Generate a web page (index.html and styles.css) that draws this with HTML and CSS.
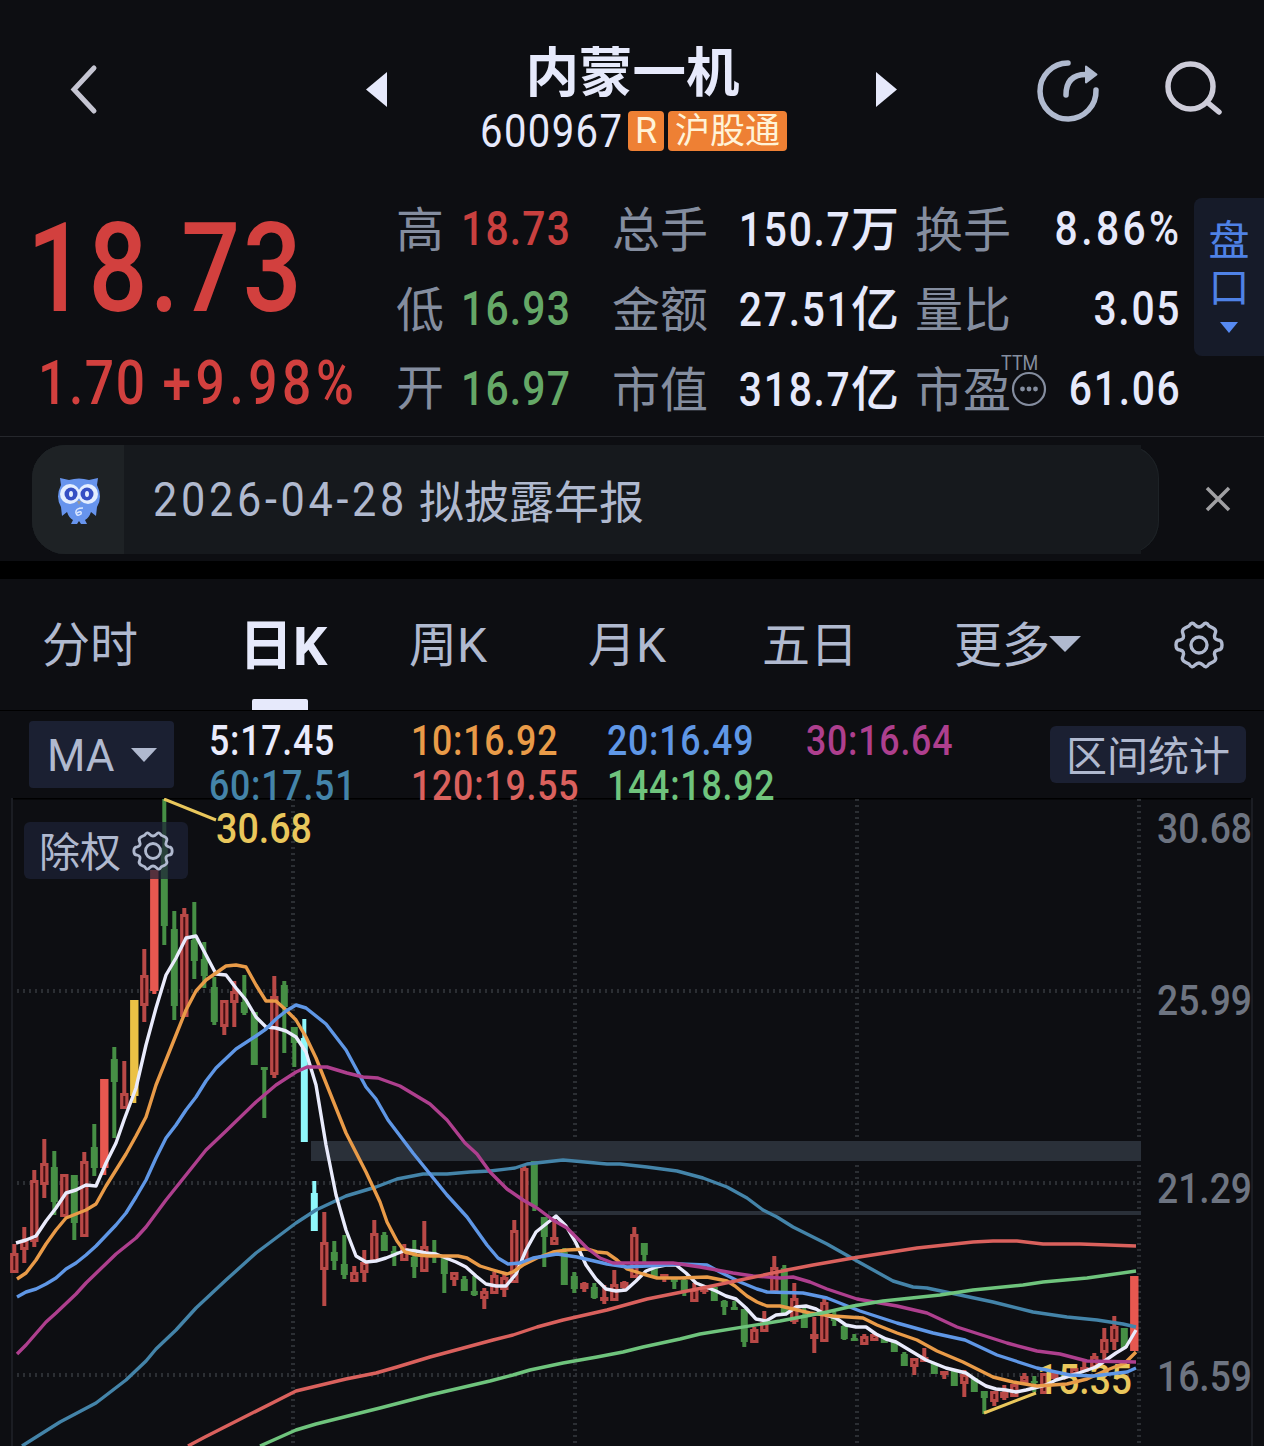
FILE: index.html
```html
<!DOCTYPE html>
<html lang="zh-CN">

<head>
	<meta charset="UTF-8">
	<meta name="viewport" content="width=device-width, initial-scale=1.0">
	<title>内蒙一机 600967</title>
	<link rel="stylesheet" href="styles.css">
</head>

<body>
	<header class="header">
		<svg class="icon-back" viewBox="0 0 30 52"><path d="M25 5L5 26.500L25 48" /></svg>
		<svg class="icon-prev" viewBox="0 0 21 35"><path d="M21 0V35L0 17.500Z" /></svg>
		<div class="title">
			<h1>内蒙一机</h1>
			<div class="code-row">
				<span class="code">600967</span>
				<span class="tag">R</span>
				<span class="tag tag-wide">沪股通</span>
			</div>
		</div>
		<svg class="icon-next" viewBox="0 0 21 35"><path d="M0 0V35L21 17.500Z" /></svg>
		<svg class="icon-share" viewBox="0 0 64 64">
			<path d="M32 4A28 28 0 1 0 60 31" />
			<path d="M30 36C30 22 37 15.500 50 15.500" />
			<path class="tip" d="M50 7.500L60.500 15.500L50 23.500Z" />
		</svg>
		<svg class="icon-search" viewBox="0 0 60 56">
			<circle cx="26.500" cy="26.500" r="22.500" />
			<path d="M43 42L55 52" />
		</svg>
	</header>

	<section class="quote">
		<div class="price">
			<div class="price-now">18.73</div>
			<div class="price-change"><span>1.70</span><span class="rate">+9.98%</span></div>
		</div>
		<div class="stats">
			<div class="stat first"><span class="label">高</span><span class="num up">18.73</span></div>
			<div class="stat second"><span class="label">总手</span><span class="value"><span class="num">150.7</span><span class="unit">万</span></span></div>
			<div class="stat third"><span class="label">换手</span><span class="num percent">8.86%</span></div>
			<div class="stat first"><span class="label">低</span><span class="num down">16.93</span></div>
			<div class="stat second"><span class="label">金额</span><span class="value"><span class="num">27.51</span><span class="unit">亿</span></span></div>
			<div class="stat third"><span class="label">量比</span><span class="num">3.05</span></div>
			<div class="stat first"><span class="label open">开</span><span class="num down">16.97</span></div>
			<div class="stat second"><span class="label">市值</span><span class="value"><span class="num">318.7</span><span class="unit">亿</span></span></div>
			<div class="stat third">
				<span class="label">市盈<span class="ttm">TTM</span>
					<svg class="icon-info" viewBox="0 0 36 36">
						<circle cx="18" cy="18" r="16" />
						<g class="dots"><circle cx="11.500" cy="18" r="2.400" /><circle cx="18" cy="18" r="2.400" /><circle cx="24.500" cy="18" r="2.400" /></g>
					</svg>
				</span>
				<span class="num">61.06</span>
			</div>
		</div>
		<div class="side-tab">
			<span>盘</span>
			<span>口</span>
			<svg viewBox="0 0 18 11"><path d="M0 0H18L9 11Z" /></svg>
		</div>
	</section>

	<section class="notice">
		<div class="notice-pill">
			<div class="notice-icon">
				<svg viewBox="0 0 44 48">
					<path class="owl-blue" d="M3 1L12 3Q22 0 32 3L41 1L40 8Q46 20 40 30L39 39L34 35Q32 41 28 43L30 47H24L22 44L20 47H14L16 43Q12 41 10 35L5 39L4 30Q-2 20 4 8Z" />
					<circle class="owl-white" cx="13" cy="17" r="10" />
					<circle class="owl-white" cx="31" cy="17" r="10" />
					<circle class="owl-dark" cx="14" cy="17" r="6.500" />
					<circle class="owl-dark" cx="30" cy="17" r="6.500" />
					<ellipse class="owl-white" cx="14" cy="17" rx="2" ry="3" />
					<ellipse class="owl-white" cx="30" cy="17" rx="2" ry="3" />
					<path class="owl-beak" d="M20 24H24L22 28Z" />
					<path class="owl-mark" d="M26 31Q18 31 19 36Q20 40 24 37Q25 33 20 36" />
				</svg>
			</div>
			<div class="notice-text"><span class="date">2026-04-28</span>拟披露年报</div>
		</div>
		<svg class="icon-close" viewBox="0 0 28 28"><path d="M3 3L25 25M25 3L3 25" /></svg>
	</section>

	<nav class="tabs">
		<a class="tab">分时</a>
		<a class="tab active">日K</a>
		<a class="tab">周K</a>
		<a class="tab">月K</a>
		<a class="tab">五日</a>
		<a class="tab">更多<svg class="caret" viewBox="0 0 32 16"><path d="M0 0H32L16 16Z" /></svg></a>
		<svg class="icon-gear" viewBox="0 0 50 48">
			<path d="M15 5Q18 0 21 4Q25 8 29 4Q32 0 35 5L39 7Q43 9 41 13Q39 18 44 19Q48 19 48 24Q48 29 44 29Q39 30 41 35Q43 39 39 41L35 43Q32 48 29 44Q25 40 21 44Q18 48 15 43L11 41Q7 39 9 35Q11 30 6 29Q2 29 2 24Q2 19 6 19Q11 18 9 13Q7 9 11 7Z" />
			<circle cx="25" cy="24" r="8" />
		</svg>
	</nav>

	<section class="legend">
		<button class="ma-btn">MA<svg class="caret" viewBox="0 0 26 14"><path d="M0 0H26L13 14Z" /></svg></button>
		<div class="ma-list">
			<span class="ma5">5:17.45</span>
			<span class="ma10">10:16.92</span>
			<span class="ma20">20:16.49</span>
			<span class="ma30">30:16.64</span>
			<span class="ma60">60:17.51</span>
			<span class="ma120">120:19.55</span>
			<span class="ma144">144:18.92</span>
		</div>
		<button class="range-btn">区间统计</button>
	</section>

	<section class="chart-box">
		<svg id="chart" viewBox="0 798 1264 648">
			<path class="frame-top" d="M12 798H1252" />
			<path class="frame" d="M12 798V1446M1252 798V1446" />
			<path class="grid" d="M17 991H1141M17 1183H1141M17 1375H1141" />
			<path class="grid" d="M293 799V1446M575 799V1446M857 799V1446M1139 799V1446" />
			<rect class="gap" x="311" y="1141" width="830" height="20" />
			<rect class="gap" x="548" y="1211" width="593" height="4" />
			<g class="axis">
				<text x="1157" y="843" textLength="95" lengthAdjust="spacingAndGlyphs">30.68</text>
				<text x="1157" y="1015" textLength="95" lengthAdjust="spacingAndGlyphs">25.99</text>
				<text x="1157" y="1203" textLength="95" lengthAdjust="spacingAndGlyphs">21.29</text>
				<text x="1157" y="1391" textLength="95" lengthAdjust="spacingAndGlyphs">16.59</text>
			</g>
			<g id="candles"></g>
			<g class="mark">
				<path d="M164 799L216 820M984 1413L1036 1393" />
				<text x="216" y="843" textLength="96" lengthAdjust="spacingAndGlyphs">30.68</text>
				<text x="1037" y="1394" textLength="95" lengthAdjust="spacingAndGlyphs">15.35</text>
			</g>
			<g id="lines"></g>
		</svg>
		<button class="adjust-btn"><span>除权</span>
			<svg class="icon-gear" viewBox="0 0 50 48">
				<path d="M15 5Q18 0 21 4Q25 8 29 4Q32 0 35 5L39 7Q43 9 41 13Q39 18 44 19Q48 19 48 24Q48 29 44 29Q39 30 41 35Q43 39 39 41L35 43Q32 48 29 44Q25 40 21 44Q18 48 15 43L11 41Q7 39 9 35Q11 30 6 29Q2 29 2 24Q2 19 6 19Q11 18 9 13Q7 9 11 7Z" />
				<circle cx="25" cy="24" r="9" />
			</svg>
		</button>
	</section>

	<script src="chart.js"></script>
</body>

</html>
```
FILE: styles.css
```css
:root {
	--bg: #0d0e12;
	--text: #e6e9fb;
	--tab: #b0b9cf;
	--label: #848d9f;
	--up: #d2403e;
	--down: #65a867;
	--button: #1b2032;
}

* {
	margin: 0;
	padding: 0;
	box-sizing: border-box;
}

body {
	width: 1264px;
	height: 1446px;
	overflow: hidden;
	background-color: var(--bg);
	color: var(--text);
	font-family: Roboto, 'Noto Sans CJK SC', sans-serif;
}

svg {
	display: block;
	flex: none;
	overflow: visible;
}

button {
	border: none;
	font-family: inherit;
	color: var(--tab);
	background-color: var(--button);
}

/* header */
.header {
	height: 180px;
	display: flex;
	align-items: flex-start;
}

.icon-back {
	width: 30px;
	height: 52px;
	margin: 63px 0 0 69px;
	fill: none;
	stroke: #c5c5d2;
	stroke-width: 5;
	stroke-linecap: round;
}

.icon-prev,
.icon-next {
	width: 21px;
	height: 35px;
	margin-top: 72px;
	fill: var(--text);
}

.icon-prev {
	margin-left: 267px;
}

.title {
	width: 489px;
	padding-top: 45px;
}

.title h1 {
	font-size: 53.5px;
	font-weight: 700;
	line-height: 58px;
	text-align: center;
	padding-left: 2px;
}

.code-row {
	display: flex;
	align-items: center;
	height: 40px;
	margin-top: 8px;
	padding-left: 93px;
}

.code {
	font-size: 46px;
	width: 148px;
	line-height: 38px;
	letter-spacing: 1.6px;
	transform: scaleX(0.87);
	transform-origin: left;
}

.tag {
	width: 36px;
	height: 40px;
	line-height: 41px;
	font-size: 36px;
	text-align: center;
	color: #fff3d8;
	background-color: #ee8034;
	border-radius: 4px;
}

.tag-wide {
	width: 119px;
	margin-left: 4px;
	font-size: 35px;
}

.icon-share {
	width: 64px;
	height: 64px;
	margin: 59px 0 0 139px;
	fill: none;
	stroke: #b0bacf;
	stroke-width: 5.5;
	stroke-linecap: round;
}

.icon-share .tip {
	fill: #b0bacf;
	stroke-width: 2;
	stroke-linejoin: round;
}

.icon-search {
	width: 60px;
	height: 56px;
	margin: 60px 0 0 64px;
	fill: none;
	stroke: #cdccd9;
	stroke-width: 5.5;
	stroke-linecap: round;
}

/* quote */
.quote {
	height: 256px;
	display: flex;
	position: relative;
}

.price {
	width: 396px;
	color: var(--up);
	font-weight: 500;
	white-space: nowrap;
}

.price-now {
	margin: 16px 0 0 27px;
	font-size: 125px;
	line-height: 146px;
	letter-spacing: 3px;
	transform: scaleX(0.83);
	transform-origin: left;
}

.price-change {
	margin: 4px 0 0 38px;
	display: flex;
	font-size: 62px;
	line-height: 73px;
	letter-spacing: 2px;
	transform: scaleX(0.83);
	transform-origin: left;
}

.price-change .rate {
	margin-left: 19px;
	letter-spacing: 5.5px;
}

.stats {
	display: grid;
	grid-template-columns: 216px 303px 265px;
	grid-template-rows: repeat(3, 80px);
	padding-top: 9px;
}

.stat {
	display: flex;
	align-items: center;
	justify-content: space-between;
	font-size: 48px;
	line-height: 60px;
}

.stat.first {
	justify-content: flex-start;
}

.stat.first .label {
	width: 65px;
}

.stat.second {
	padding-right: 16px;
}

.label {
	color: var(--label);
	display: flex;
	align-items: center;
	position: relative;
	padding-top: 4px;
}

.label.open {
	padding-top: 0;
}

.value {
	font-weight: 500;
	display: flex;
	padding-top: 2px;
}

.num {
	font-weight: 500;
	letter-spacing: 2px;
	transform: scaleX(0.85);
	transform-origin: right;
}

.percent {
	letter-spacing: 4px;
}

.third .num {
	margin-right: -1px;
}

.third .percent {
	margin-right: -3px;
}

.first .num {
	letter-spacing: 1.4px;
	transform-origin: left;
}

.up {
	color: #c9403f;
}

.down {
	color: var(--down);
}

.ttm {
	position: absolute;
	left: 86px;
	top: -4px;
	font-size: 20px;
	line-height: 20px;
	transform: scaleX(0.9);
	transform-origin: left;
}

.icon-info {
	width: 36px;
	height: 36px;
	margin-top: -5px;
	fill: none;
	stroke: var(--label);
	stroke-width: 2.2;
}

.icon-info .dots {
	fill: var(--label);
	stroke: none;
}

.side-tab {
	width: 70px;
	height: 158px;
	margin: 18px 0 0 14px;
	padding-top: 20px;
	display: flex;
	flex-direction: column;
	align-items: center;
	font-size: 41px;
	line-height: 47px;
	color: #4f82e6;
	background-color: #161b29;
	border-radius: 8px 0 0 8px;
}

.side-tab svg {
	width: 18px;
	height: 11px;
	margin-top: 10px;
	fill: #568af2;
}

/* notice */
.notice {
	height: 143px;
	padding: 8px 0 0 32px;
	display: flex;
	border-top: 1px solid #25272c;
	border-bottom: 18px solid #000;
}

.notice-pill {
	width: 1127px;
	height: 109px;
	display: flex;
	background-color: #16191d;
	border-radius: 33px;
	box-shadow: inset 0 0 0 1px #1d2226;
}

.notice-icon {
	width: 92px;
	padding: 32px 0 0 25px;
	background-color: #1e2225;
	border-radius: 33px 0 0 33px;
}

.notice-icon svg {
	width: 44px;
	height: 48px;
}

.owl-blue {
	fill: #6794ed;
}

.owl-white {
	fill: #e4eeff;
}

.owl-dark {
	fill: #354fc4;
}

.owl-beak {
	fill: #9a9694;
}

.owl-mark {
	fill: none;
	stroke: #dce8ff;
	stroke-width: 1.5;
}

.notice-text {
	width: 1017px;
	padding-left: 29px;
	display: flex;
	align-items: center;
	font-size: 45px;
	color: var(--tab);
	background-color: #16191d;
}

.date {
	width: 266px;
	font-size: 48px;
	letter-spacing: 4.1px;
	white-space: nowrap;
	transform: scaleX(0.9);
	transform-origin: left;
}

.icon-close {
	width: 28px;
	height: 28px;
	margin: 40px 0 0 45px;
	fill: none;
	stroke: #a0a0a3;
	stroke-width: 3.5;
}

/* tabs */
.tabs {
	height: 132px;
	display: flex;
	align-items: center;
	padding-left: 42px;
	border-bottom: 1px solid #000;
}

.tab {
	height: 131px;
	padding-bottom: 7px;
	display: flex;
	align-items: center;
	font-size: 48px;
	color: var(--tab);
	position: relative;
}

.tab:nth-child(1) {
	width: 197px;
}

.tab:nth-child(2) {
	width: 170px;
}

.tab:nth-child(3) {
	width: 179px;
}

.tab:nth-child(4) {
	width: 174px;
}

.tab:nth-child(5) {
	width: 192px;
}

.tab:nth-child(6) {
	width: 220px;
}

.tab.active {
	font-size: 54px;
	font-weight: 700;
	color: var(--text);
}

.tab.active::after {
	content: "";
	position: absolute;
	left: 13px;
	bottom: 0;
	width: 56px;
	height: 11px;
	background-color: var(--text);
	border-radius: 2px 2px 0 0;
}

.tab .caret {
	width: 32px;
	height: 16px;
	margin: 5px 0 0 -1px;
	fill: var(--tab);
}

.icon-gear {
	width: 50px;
	height: 48px;
	fill: none;
	stroke: var(--tab);
	stroke-width: 3.4;
}

/* MA legend */
.legend {
	height: 87px;
	display: flex;
	position: relative;
	z-index: 1;
}

.ma-btn {
	width: 145px;
	height: 67px;
	margin: 10px 0 0 29px;
	padding: 2px 0 0 18px;
	display: flex;
	align-items: center;
	font-size: 44px;
	border-radius: 4px;
}

.ma-btn .caret {
	width: 26px;
	height: 14px;
	margin: -2px 0 0 16px;
	fill: var(--tab);
}

.ma-list {
	width: 842px;
	margin: 8px 0 0 35px;
	display: grid;
	grid-template-columns: 202px 196px 199px 180px;
	grid-template-rows: 45px 45px;
	font-size: 42px;
	font-weight: 500;
	line-height: 44px;
}

.ma-list span {
	letter-spacing: 0.9px;
	transform: scaleX(0.85);
	transform-origin: left;
	white-space: nowrap;
}

.ma5 { color: #e9ebfc; }
.ma10 { color: #e99b48; }
.ma20 { color: #5f97e6; }
.ma30 { color: #ae3f8e; }
.ma60 { color: #4484a9; }
.ma120 { color: #da615d; }
.ma144 { color: #6fc47d; }

.range-btn {
	width: 196px;
	height: 57px;
	margin: 15px 0 0 -1px;
	padding-top: 6px;
	font-size: 41px;
	line-height: 51px;
	border-radius: 6px;
}

/* chart */
.chart-box {
	height: 648px;
	position: relative;
}

#chart {
	width: 1264px;
	height: 648px;
	overflow: hidden;
}

#chart text {
	font-size: 43px;
	font-weight: 500;
}

.frame {
	stroke: #1b1d23;
	stroke-width: 2;
}

.frame-top {
	stroke: #000;
	stroke-width: 3;
}

.grid {
	stroke: #2b2e33;
	stroke-width: 4;
	stroke-dasharray: 2 4;
}

.gap {
	fill: #2a3039;
}

.axis {
	fill: #6d7481;
}

.mark {
	fill: #e9c75c;
}

.mark path {
	stroke: #e9c75c;
	stroke-width: 3;
}

.red { fill: #b94947; }
.hollow { fill: #430f12; }
.green { fill: #468f45; }
.limit { fill: #e75850; }
.yellow { fill: #ebc145; }
.cyan { fill: #8ff8fb; }

#lines polyline {
	fill: none;
	stroke: currentColor;
	stroke-width: 3.4;
	stroke-linejoin: round;
}

.adjust-btn {
	position: absolute;
	left: 24px;
	top: 24px;
	width: 164px;
	height: 57px;
	padding-left: 15px;
	display: flex;
	align-items: center;
	gap: 11px;
	font-size: 41px;
	line-height: 52px;
	border-radius: 6px;
	background-color: rgba(29, 34, 54, 0.72);
}

.adjust-btn span {
	padding-top: 5px;
}

.adjust-btn .icon-gear {
	width: 42px;
	height: 40px;
}
```
FILE: chart.js
```js
const SVG_NS = 'http://www.w3.org/2000/svg';

// one candle every 10 units: type, high, body top, body bottom, low
// r = hollow red, g = green, l = limit up, y = yellow, c = cyan
const candles = `
r 1244 1253 1273 1273|r 1227 1240 1250 1263|r 1170 1180 1242 1247|r 1139 1163 1185 1198
g 1151 1167 1202 1215|r 1174 1174 1217 1217|g 1175 1175 1223 1240|r 1152 1161 1237 1237
g 1124 1147 1168 1176|l 1079 1079 1168 1175|g 1047 1059 1082 1138|r 1061 1093 1109 1109
y 1000 1000 1096 1103|r 949 975 1006 1022|l 870 870 991 994|g 799 848 926 945
g 911 929 1006 1020|r 908 914 1017 1017|g 902 940 961 979|g 942 959 976 988
g 977 987 1022 1025|r 1000 1000 1027 1035|r 981 991 1003 1027|g 975 1002 1013 1015
g 1012 1012 1065 1065|g 1067 1067 1070 1118|r 976 996 1075 1078|g 981 985 1007 1053
g 1027 1027 1043 1067|c 1019 1038 1142 1142|c 1181 1193 1231 1231|r 1212 1242 1270 1306
g 1241 1252 1261 1270|g 1235 1264 1275 1279|r 1266 1272 1282 1282|r 1250 1262 1273 1282
r 1220 1233 1262 1262|g 1232 1235 1251 1251|g 1246 1251 1255 1266|r 1244 1248 1261 1261
g 1240 1257 1267 1278|r 1221 1246 1272 1272|g 1240 1253 1255 1263|g 1258 1258 1274 1293
r 1272 1272 1280 1286|g 1276 1279 1291 1291|g 1276 1291 1295 1296|r 1288 1291 1299 1309
r 1272 1275 1294 1294|r 1272 1277 1290 1297|r 1220 1230 1283 1283|r 1166 1168 1263 1263
g 1161 1161 1206 1211|g 1217 1217 1237 1267|r 1219 1237 1245 1245|g 1248 1252 1285 1285
g 1272 1276 1289 1293|r 1282 1283 1289 1292|g 1283 1287 1298 1299|r 1285 1297 1301 1304
r 1270 1284 1301 1301|r 1281 1282 1288 1289|r 1227 1234 1278 1278|g 1243 1243 1255 1262
g 1268 1268 1278 1278|r 1274 1274 1279 1282|g 1278 1278 1282 1289|g 1279 1280 1292 1296
r 1283 1289 1302 1302|r 1287 1287 1292 1294|g 1287 1287 1301 1301|g 1300 1301 1307 1315
g 1301 1307 1310 1310|g 1309 1309 1342 1347|r 1327 1329 1343 1343|r 1311 1322 1332 1332
r 1256 1267 1293 1293|g 1265 1268 1315 1315|r 1283 1298 1322 1324|g 1307 1315 1328 1328
r 1317 1334 1339 1353|r 1299 1302 1342 1342|g 1312 1316 1321 1326|g 1325 1326 1339 1340
g 1334 1338 1341 1341|r 1334 1336 1345 1345|r 1332 1334 1341 1341|g 1338 1338 1343 1343
g 1342 1342 1352 1352|g 1352 1354 1366 1366|r 1358 1358 1367 1375|r 1348 1357 1362 1362
g 1363 1363 1374 1374|r 1371 1371 1375 1379|g 1371 1371 1386 1386|r 1370 1374 1384 1397
g 1378 1378 1392 1392|g 1391 1391 1398 1414|r 1391 1391 1402 1406|r 1385 1392 1398 1400
r 1384 1384 1397 1397|r 1373 1376 1383 1383|g 1376 1381 1383 1392|r 1373 1373 1394 1394
r 1371 1373 1379 1379|g 1370 1373 1377 1377|r 1368 1368 1375 1375|r 1361 1367 1372 1372
r 1353 1356 1368 1368|r 1328 1339 1353 1360|r 1316 1326 1342 1350|g 1328 1328 1348 1348
l 1276 1276 1351 1351`.trim().split(/[|\n]/);

const lines = {
	ma60: '22,1446 60,1422 96,1403 126,1380 146,1361 156,1349 176,1330 196,1308 226,1280 256,1253 276,1238 296,1223 316,1210 346,1196 376,1187 397,1179 423,1174 447,1174 470,1172 490,1171 515,1168 527,1164 563,1160 607,1164 620,1164 647,1167 677,1171 703,1178 727,1187 747,1198 763,1210 777,1217 793,1227 827,1244 857,1261 893,1281 913,1287 927,1288 960,1295 993,1302 1033,1312 1067,1317 1097,1320 1123,1324 1136,1327',
	ma5: '16,1243 26,1240 36,1236 46,1221 56,1208 66,1193 76,1190 86,1185 96,1186 106,1163 116,1143 124,1120 136,1088 146,1045 156,1008 166,975 176,958 186,938 196,936 206,955 216,974 226,975 236,988 246,1000 256,1017 266,1027 276,1028 286,1031 296,1037 306,1052 316,1085 326,1145 336,1195 346,1230 356,1256 366,1262 376,1261 386,1258 396,1254 406,1250 416,1251 426,1253 436,1254 446,1258 456,1262 466,1267 476,1276 486,1284 496,1286 506,1286 516,1274 526,1250 536,1232 546,1224 556,1216 566,1226 576,1243 586,1265 596,1279 606,1289 616,1291 626,1290 636,1281 646,1271 656,1267 666,1265 676,1265 686,1273 696,1283 706,1287 716,1291 726,1296 736,1299 746,1308 756,1319 766,1321 776,1315 786,1314 796,1307 806,1306 816,1309 826,1315 836,1318 846,1325 856,1327 866,1327 876,1334 886,1339 896,1342 906,1348 926,1360 946,1368 966,1373 976,1380 986,1386 996,1389 1006,1390 1016,1392 1026,1390 1046,1385 1056,1380 1066,1377 1076,1374 1096,1367 1116,1353 1126,1347 1136,1330',
	ma10: '17,1279 26,1273 36,1260 46,1244 56,1230 66,1218 76,1214 86,1210 96,1204 106,1186 116,1170 126,1154 136,1136 146,1117 156,1085 166,1060 176,1035 186,1010 196,991 206,980 216,973 226,966 236,965 246,967 256,985 266,1001 276,1001 286,1010 296,1020 306,1037 316,1058 326,1083 346,1133 366,1172 380,1202 387,1222 397,1241 405,1252 417,1255 430,1256 458,1256 467,1258 480,1266 493,1270 507,1274 513,1272 523,1265 537,1258 553,1252 567,1250 587,1249 597,1252 607,1253 617,1260 627,1269 643,1274 657,1278 680,1278 707,1277 727,1281 735,1286 747,1296 757,1302 767,1306 780,1306 793,1309 810,1313 833,1316 863,1318 877,1325 897,1333 917,1340 937,1351 963,1362 993,1377 1013,1382 1037,1386 1067,1384 1087,1379 1107,1370 1125,1363 1136,1352',
	ma20: '17,1297 26,1292 36,1289 46,1284 56,1278 66,1269 76,1263 86,1255 96,1246 116,1225 126,1213 136,1197 146,1180 156,1158 166,1138 176,1125 186,1110 196,1097 206,1081 216,1068 236,1049 256,1036 266,1029 276,1019 286,1011 296,1005 306,1008 326,1024 346,1050 366,1087 376,1099 388,1120 413,1153 447,1195 467,1217 487,1245 498,1258 508,1264 520,1263 533,1258 557,1254 577,1257 607,1264 627,1267 647,1266 680,1264 707,1265 720,1272 740,1282 757,1289 767,1292 803,1293 827,1298 860,1311 897,1323 933,1333 965,1340 997,1355 1037,1368 1070,1375 1093,1376 1127,1372 1136,1368',
	ma30: '17,1354 26,1345 46,1322 56,1313 76,1294 86,1283 116,1254 136,1238 146,1227 166,1200 206,1150 226,1131 256,1102 276,1085 296,1072 307,1067 327,1067 347,1073 363,1077 378,1078 400,1086 430,1104 447,1120 465,1143 477,1154 490,1172 507,1189 523,1200 537,1208 553,1220 567,1228 587,1248 600,1258 613,1263 647,1263 673,1263 700,1267 733,1273 753,1276 780,1278 793,1277 810,1282 827,1289 857,1299 897,1306 927,1313 957,1327 1007,1343 1037,1351 1060,1354 1087,1361 1136,1362',
	ma120: '188,1446 205,1437 296,1391 346,1379 376,1373 397,1367 430,1357 493,1340 513,1335 537,1327 563,1320 607,1310 647,1299 707,1287 787,1270 813,1265 853,1258 917,1248 973,1242 993,1241 1017,1241 1043,1244 1080,1244 1136,1246',
	ma144: '260,1446 296,1430 316,1424 380,1408 430,1395 490,1381 513,1375 530,1370 563,1363 597,1357 623,1352 643,1347 680,1339 700,1334 780,1321 827,1312 853,1306 883,1301 940,1295 973,1290 1023,1285 1043,1282 1087,1278 1136,1271'
};

const colors = { r: 'red', g: 'green', l: 'limit', y: 'yellow', c: 'cyan' };
const candleGroup = document.getElementById('candles');
const lineGroup = document.getElementById('lines');

function addRect(cls, x, y, width, height) {
	const rect = document.createElementNS(SVG_NS, 'rect');
	rect.setAttribute('class', cls);
	rect.setAttribute('x', x);
	rect.setAttribute('y', y);
	rect.setAttribute('width', width);
	rect.setAttribute('height', Math.max(height, 1));
	candleGroup.appendChild(rect);
}

candles.forEach((row, i) => {
	const [type, ...values] = row.split(' ');
	const [high, top, bottom, low] = values.map(Number);
	const x = 14.3 + i * 10;
	const width = type === 'r' || type === 'l' || type === 'y' ? 8.4 : 7;

	addRect(colors[type], x - 2, high, 4, low - high);
	addRect(colors[type], x - width / 2, top, width, bottom - top);
	if (type === 'r' && bottom - top > 6) {
		addRect('hollow', x - 1, top + 3, 2, bottom - top - 6);
	}
});

Object.keys(lines).forEach(name => {
	const line = document.createElementNS(SVG_NS, 'polyline');
	line.setAttribute('class', name);
	line.setAttribute('points', lines[name]);
	lineGroup.appendChild(line);
});
```
